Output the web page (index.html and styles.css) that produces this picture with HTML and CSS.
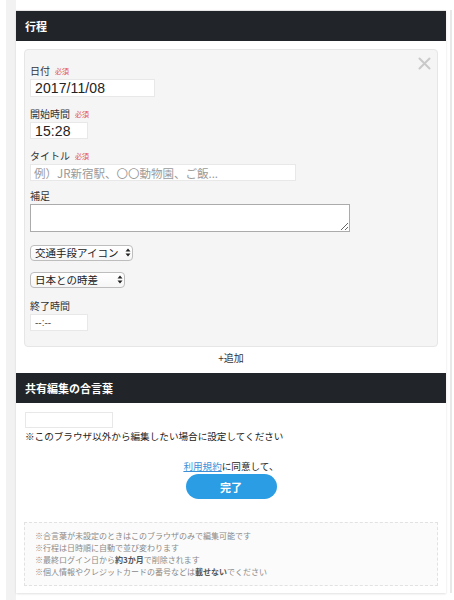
FILE: index.html
```html
<!DOCTYPE html>
<html lang="ja">
<head>
<meta charset="utf-8">
<title>行程</title>
<link rel="stylesheet" href="styles.css">
</head>
<body>
<div class="frame">
  <div class="sheet">
    <h2 class="bar">行程</h2>
    <div class="section">
      <div class="card">
        <span class="close" aria-label="閉じる">
          <svg width="13" height="13" viewBox="0 0 13 13"><path d="M1.5 1.5 L11.5 11.5 M11.5 1.5 L1.5 11.5" stroke="#c9c9c9" stroke-width="2" stroke-linecap="round" fill="none"/></svg>
        </span>
        <div class="label">日付<span class="req">必須</span></div>
        <input class="in num date" type="text" value="2017/11/08">
        <div class="label gap">開始時間<span class="req">必須</span></div>
        <input class="in num time" type="text" value="15:28">
        <div class="label gap">タイトル<span class="req">必須</span></div>
        <input class="in title" type="text" placeholder="例）JR新宿駅、〇〇動物園、ご飯...">
        <div class="label gap-memo">補足</div>
        <textarea class="memo"></textarea>
        <div class="sel sel-icon">
          <select><option>交通手段アイコン</option></select>
          <svg class="arrows" width="6" height="9" viewBox="0 0 6 9"><path d="M0.5 3.5 L3 0.5 L5.5 3.5 Z M0.5 5.5 L3 8.5 L5.5 5.5 Z" fill="#222"/></svg>
        </div>
        <div class="sel sel-tz">
          <select><option>日本との時差</option></select>
          <svg class="arrows" width="6" height="9" viewBox="0 0 6 9"><path d="M0.5 3.5 L3 0.5 L5.5 3.5 Z M0.5 5.5 L3 8.5 L5.5 5.5 Z" fill="#222"/></svg>
        </div>
        <div class="label gap-end">終了時間</div>
        <input class="in endtime" type="text" value="--:--">
      </div>
      <div class="add">+追加</div>
    </div>
    <h2 class="bar">共有編集の合言葉</h2>
    <div class="section2">
      <input class="in pass" type="text">
      <p class="hint">※このブラウザ以外から編集したい場合に設定してください</p>
      <p class="agree"><a href="#">利用規約</a>に同意して、</p>
      <button class="done" type="button">完了</button>
      <div class="notes">
        <p>※合言葉が未設定のときはこのブラウザのみで編集可能です</p>
        <p>※行程は日時順に自動で並び変わります</p>
        <p>※最終ログイン日から<b>約3か月</b>で削除されます</p>
        <p>※個人情報やクレジットカードの番号などは<b>載せない</b>でください</p>
      </div>
    </div>
  </div>
</div>
</body>
</html>
```

FILE: styles.css
```css
* { box-sizing: border-box; }
html, body { margin: 0; padding: 0; background: #fff; }
body {
  font-family: "Noto Sans CJK JP", "Noto Sans", sans-serif;
  color: #333;
  width: 454px;
  height: 600px;
  overflow: hidden;
}
.frame {
  margin-left: 6px;
  border-left: 10px solid #f2f2f2;
  height: 600px;
  padding-top: 10px;
}
.sheet {
  width: 430px;
  background: #fff;
  border-top: 1px solid #e6e6e6;
  box-shadow: 0 1px 2px rgba(0,0,0,0.12), 4px 0 0 0 #fff, 6px 0 0 0 #e8e8e8;
  padding-bottom: 7px;
}
.bar {
  margin: 0;
  height: 30px;
  line-height: 30px;
  background: #212428;
  color: #fff;
  font-size: 11px;
  font-weight: 700;
  padding-left: 9px;
}
.section { padding: 8px 8px 0; }
.card {
  position: relative;
  background: #f5f5f5;
  border: 1px solid #e6e6e6;
  border-radius: 4px;
  padding: 14px 5px 15px;
}
.close {
  position: absolute;
  top: 7px;
  right: 6px;
  width: 13px;
  height: 13px;
  display: block;
}
.close svg { display: block; }
.label {
  font-size: 10px;
  line-height: 13px;
  height: 14px;
  color: #333;
  margin-bottom: 1px;
}
.label.gap { margin-top: 10px; }
.label.gap-memo { margin-top: 8px; }
.label.gap-end { margin-top: 11px; }
.req {
  color: #e0505a;
  font-size: 7px;
  margin-left: 5px;
  vertical-align: 1px;
}
.in {
  display: block;
  border: 1px solid #e8e8e8;
  background: #fff;
  margin: 0;
  padding: 0 4px;
  outline: none;
  font-family: "Noto Sans CJK JP", sans-serif;
  color: #222;
}
.num {
  font-family: "Liberation Sans", "Noto Sans CJK JP", sans-serif;
  font-size: 14px;
  letter-spacing: 0.1px;
}
.date { width: 125px; height: 18px; }
.time { width: 58px; height: 17px; }
.title {
  width: 266px;
  height: 17px;
  font-size: 11.5px;
  padding-left: 3px;
}
.title::placeholder { color: #9a9a9a; }
.memo {
  display: block;
  width: 320px;
  height: 28px;
  margin: 0;
  border: 1px solid #ababab;
  background: #fff;
  resize: both;
  padding: 2px;
}
.sel {
  position: relative;
  height: 16px;
}
.sel select {
  -webkit-appearance: none;
  appearance: none;
  display: block;
  height: 16px;
  border: 1px solid #bdbdbd;
  border-radius: 4px;
  background: linear-gradient(#ffffff, #f6f6f6);
  font-family: "Noto Sans CJK JP", sans-serif;
  font-size: 10.5px;
  line-height: 14px;
  padding: 0 0 0 4px;
  color: #222;
  margin: 0;
}
.sel .arrows {
  position: absolute;
  top: 3px;
}
.sel-icon { margin-top: 13px; }
.sel-icon select { width: 103px; }
.sel-icon .arrows { left: 95px; }
.sel-tz { margin-top: 11px; }
.sel-tz select { width: 95px; }
.sel-tz .arrows { left: 87px; }
.endtime {
  width: 58px;
  height: 17px;
  font-size: 10px;
  color: #555;
  font-family: "Liberation Sans", sans-serif;
}
.add {
  text-align: center;
  font-size: 10px;
  line-height: 16px;
  margin: 3px 0 7px;
  color: #333;
}
.section2 { padding: 9px 8px 0; }
.pass {
  width: 88px;
  height: 16px;
  margin-left: 1px;
}
.hint {
  margin: 1px 0 0 1px;
  font-size: 9.6px;
  line-height: 14px;
  color: #222;
}
.agree {
  margin: 16px 0 0;
  text-align: center;
  font-size: 9.6px;
  line-height: 14px;
  color: #222;
}
.agree a { color: #3b8fd9; text-decoration: underline; }
.done {
  display: block;
  margin: 1px auto 0;
  width: 91px;
  height: 25px;
  border: 0;
  border-radius: 13px;
  background: #2b9de4;
  color: #fff;
  font-family: "Noto Sans CJK JP", sans-serif;
  font-size: 11px;
  font-weight: 700;
  padding: 0;
}
.notes {
  margin-top: 23px;
  border: 1px dashed #e2e2e2;
  background: #fbfbfb;
  padding: 7px 10px 7px;
}
.notes p {
  margin: 0;
  font-size: 8px;
  line-height: 12px;
  color: #8a8a8a;
}
.notes b { color: #555; font-weight: 700; }
```
